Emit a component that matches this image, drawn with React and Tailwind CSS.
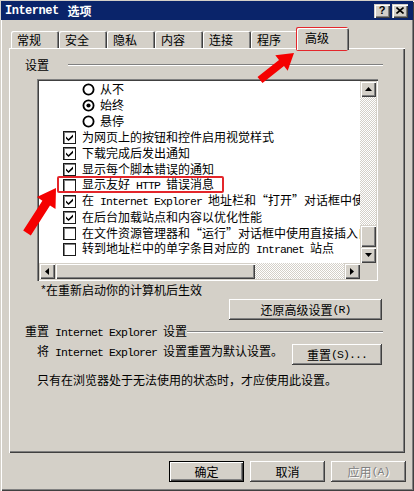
import React from 'react';

// 经典 Windows 立体边框
const RAISED = 'shadow-[inset_-1px_-1px_#404040,inset_1px_1px_#ffffff,inset_-2px_-2px_#808080]';
const SCROLL_RAISED = 'shadow-[inset_1px_1px_#d4d0c8,inset_2px_2px_#ffffff,inset_-1px_-1px_#404040,inset_-2px_-2px_#808080]';
const CHECKER = "bg-[repeating-conic-gradient(#ffffff_0%_25%,#d4d0c8_0%_50%)] [background-size:2px_2px]";

const M = ({ children, className = '' }) => (
  <span className={`whitespace-pre font-['Liberation_Mono',monospace] text-[11.5px] tracking-[-0.9px] ${className}`}>
    {children}
  </span>
);

const Check = ({ checked }) => (
  <span className="w-[13px] h-[13px] shrink-0 bg-white border border-[#1a1a1a] shadow-[inset_1px_1px_#808080] flex items-center justify-center">
    {checked && (
      <svg width="7" height="7" viewBox="0 0 7 7">
        <polygon points="0,2.5 2.5,5 7,0.5 7,3 2.5,7 0,4.5" fill="#000" />
      </svg>
    )}
  </span>
);

const Radio = ({ checked }) => (
  <svg width="13" height="13" viewBox="0 0 13 13" className="shrink-0">
    <circle cx="6.5" cy="6.5" r="5.1" fill="#fff" stroke="#000" strokeWidth="1.8" />
    {checked && <circle cx="6.5" cy="6.5" r="2.1" fill="#000" />}
  </svg>
);

const rows = [
  { type: 'radio', checked: false, text: '从不' },
  { type: 'radio', checked: true, text: '始终' },
  { type: 'radio', checked: false, text: '悬停' },
  { type: 'check', checked: true, text: '为网页上的按钮和控件启用视觉样式' },
  { type: 'check', checked: true, text: '下载完成后发出通知' },
  { type: 'check', checked: true, text: '显示每个脚本错误的通知' },
  { type: 'check', checked: false, text: <>显示友好<M> HTTP </M>错误消息</> },
  { type: 'check', checked: true, text: <>在<M> Internet Explorer </M>地址栏和“打开”对话框中使用直接插入自动完成</> },
  { type: 'check', checked: true, text: '在后台加载站点和内容以优化性能' },
  { type: 'check', checked: false, text: '在文件资源管理器和“运行”对话框中使用直接插入自动完成' },
  { type: 'check', checked: false, text: <>转到地址栏中的单字条目对应的<M> Intranet </M>站点</> },
];

const tabs = ['常规', '安全', '隐私', '内容', '连接', '程序'];

const ScrollBtn = ({ children }) => (
  <div className={`w-[16px] h-[16px] bg-[#d4d0c8] flex items-center justify-center ${SCROLL_RAISED}`}>
    {children}
  </div>
);

const Btn = ({ children, className = '', isDefault = false, disabled = false }) => (
  <div
    className={`h-[21px] flex items-center justify-center leading-[14px] ${
      isDefault
        ? 'shadow-[inset_0_0_0_1px_#000000,inset_2px_2px_#ffffff,inset_-2px_-2px_#404040,inset_-3px_-3px_#808080]'
        : RAISED
    } ${disabled ? 'text-[#808080] [text-shadow:1px_1px_#ffffff]' : ''} ${className}`}
  >
    {children}
  </div>
);

export default function App() {
  return (
    <div className="relative w-[414px] h-[491px] overflow-hidden bg-[#d4d0c8] text-[12px] text-black font-['Noto_Sans_CJK_SC',sans-serif] shadow-[inset_1px_1px_#d4d0c8,inset_2px_2px_#ffffff,inset_-1px_-1px_#404040,inset_-2px_-2px_#808080]">
      {/* 标题栏 */}
      <div className="mx-[1px] mt-[1px] h-[19px] bg-[#0a246a] flex items-center pl-[4px] pr-[5px]">
        <div className="flex items-center text-white font-bold leading-[14px]">
          <M className="font-bold !text-[12px] !tracking-[-0.5px]">Internet</M>
          <span className="ml-[9px]">选项</span>
        </div>
        <div className="ml-auto flex gap-[2px]">
          <div className={`w-[16px] h-[14px] bg-[#d4d0c8] flex items-center justify-center ${SCROLL_RAISED}`}>
            <span className="font-['Liberation_Sans',sans-serif] font-bold text-[11px] leading-none">?</span>
          </div>
          <div className={`w-[16px] h-[14px] bg-[#d4d0c8] flex items-center justify-center ${SCROLL_RAISED}`}>
            <svg width="8" height="7" viewBox="0 0 8 7">
              <path d="M0.5 0.5 L7.5 6.5 M7.5 0.5 L0.5 6.5" stroke="#000" strokeWidth="1.6" />
            </svg>
          </div>
        </div>
      </div>

      {/* 选项卡 */}
      <div className="flex items-end h-[28px] pl-[11px]">
        {tabs.map((t) => (
          <div
            key={t}
            className="w-[48px] h-[17px] pl-[6px] flex items-center leading-[14px] rounded-t-[2px] shadow-[inset_1px_1px_#ffffff,inset_-1px_0_#404040,inset_-2px_0_#808080]"
          >
            {t}
          </div>
        ))}
        <div className="relative z-10 -ml-[2px] -mb-[2px] w-[52px] h-[22px] pl-[8px] pt-[3px] leading-[14px] bg-[#d4d0c8] rounded-t-[2px] shadow-[inset_1px_1px_#ffffff,inset_-1px_0_#404040,inset_-2px_0_#808080]">
          高级
        </div>
      </div>

      {/* 选项卡面板 */}
      <div className="mx-[9px] h-[405px] flex flex-col shadow-[inset_1px_1px_#ffffff,inset_-1px_-1px_#404040,inset_-2px_-2px_#808080]">
        <div className="mt-[10px] h-[14px] flex items-center pl-[16px] pr-[22px]">
          <span className="leading-[14px]">设置</span>
          <div className="flex-1 ml-[19px] h-[2px] border-y border-t-[#808080] border-b-white" />
        </div>

        {/* 列表框 */}
        <div className="ml-[28px] mt-[7px] w-[341px] h-[202px] p-[2px] bg-white shadow-[inset_1px_1px_#808080,inset_2px_2px_#404040,inset_-1px_-1px_#ffffff,inset_-2px_-2px_#d4d0c8]">
          <div className="grid grid-cols-[321px_16px] grid-rows-[182px_16px] w-full h-full">
            <div className="overflow-hidden bg-white">
              {rows.map((r, i) => (
                <div key={i} className="h-[16px] flex items-center whitespace-nowrap leading-[16px]">
                  {r.type === 'radio' ? (
                    <span className="pl-[43px] flex items-center gap-[5px]">
                      <Radio checked={r.checked} />
                      <span>{r.text}</span>
                    </span>
                  ) : (
                    <span className="pl-[24px] flex items-center gap-[6px]">
                      <Check checked={r.checked} />
                      <span>{r.text}</span>
                    </span>
                  )}
                </div>
              ))}
            </div>

            {/* 垂直滚动条 */}
            <div className="flex flex-col">
              <ScrollBtn>
                <svg width="7" height="4" viewBox="0 0 7 4">
                  <polygon points="3.5,0 7,4 0,4" fill="#000" />
                </svg>
              </ScrollBtn>
              <div className={`h-[128px] ${CHECKER}`} />
              <div className={`h-[22px] bg-[#d4d0c8] ${SCROLL_RAISED}`} />
              <ScrollBtn>
                <svg width="7" height="4" viewBox="0 0 7 4">
                  <polygon points="0,0 7,0 3.5,4" fill="#000" />
                </svg>
              </ScrollBtn>
            </div>

            {/* 水平滚动条 */}
            <div className="flex">
              <ScrollBtn>
                <svg width="4" height="7" viewBox="0 0 4 7">
                  <polygon points="0,3.5 4,0 4,7" fill="#000" />
                </svg>
              </ScrollBtn>
              <div className={`w-[200px] h-[16px] bg-[#d4d0c8] ${SCROLL_RAISED}`} />
              <div className={`w-[89px] h-[16px] ${CHECKER}`} />
              <ScrollBtn>
                <svg width="4" height="7" viewBox="0 0 4 7">
                  <polygon points="0,0 4,3.5 0,7" fill="#000" />
                </svg>
              </ScrollBtn>
            </div>
            <div className="bg-[#d4d0c8]" />
          </div>
        </div>

        <div className="mt-[2px] ml-[31px] h-[14px] flex items-center leading-[14px]">
          <M>*</M>
          <span>在重新启动你的计算机后生效</span>
        </div>

        <div className="mt-[2px] flex justify-end pr-[23px]">
          <Btn className="w-[153px]">
            还原高级设置<M>(R)</M>
          </Btn>
        </div>

        <div className="mt-[5px] h-[14px] flex items-center pl-[16px] pr-[22px]">
          <span className="leading-[14px] whitespace-nowrap">
            重置<M> Internet Explorer </M>设置
          </span>
          <div className="flex-1 h-[2px] border-y border-t-[#808080] border-b-white" />
        </div>

        <div className="mt-[5px] flex items-start pl-[28px] pr-[23px]">
          <span className="leading-[14px] whitespace-nowrap">
            将<M> Internet Explorer </M>设置重置为默认设置。
          </span>
          <Btn className="ml-auto w-[90px]">
            重置<M>(S)...</M>
          </Btn>
        </div>

        <div className="mt-[8px] pl-[28px] leading-[14px] whitespace-nowrap">
          只有在浏览器处于无法使用的状态时，才应使用此设置。
        </div>
      </div>

      {/* 底部按钮 */}
      <div className="mt-[8px] flex justify-end gap-[6px] pr-[8px]">
        <Btn isDefault className="w-[75px]">确定</Btn>
        <Btn className="w-[75px]">取消</Btn>
        <Btn disabled className="w-[75px]">
          应用<M>(A)</M>
        </Btn>
      </div>

      {/* 红色标注 */}
      <svg className="absolute inset-0 pointer-events-none" width="414" height="491" viewBox="0 0 414 491">
        <rect x="297" y="28" width="50" height="22" rx="1" fill="none" stroke="#e3262b" strokeWidth="2" />
        <rect x="58" y="177" width="165" height="15" rx="1" fill="none" stroke="#e3262b" strokeWidth="2" />
        <polygon
          points="257.5,76.9 279,59.9 275.3,55.2 294,53 287.7,70.8 284,66.1 262.5,83.1"
          fill="#f50000"
        />
        <polygon
          points="23.2,230.6 42.4,200.7 36.9,197.1 56,188 55.5,209.1 50,205.5 30.8,235.4"
          fill="#f50000"
        />
      </svg>
    </div>
  );
}
